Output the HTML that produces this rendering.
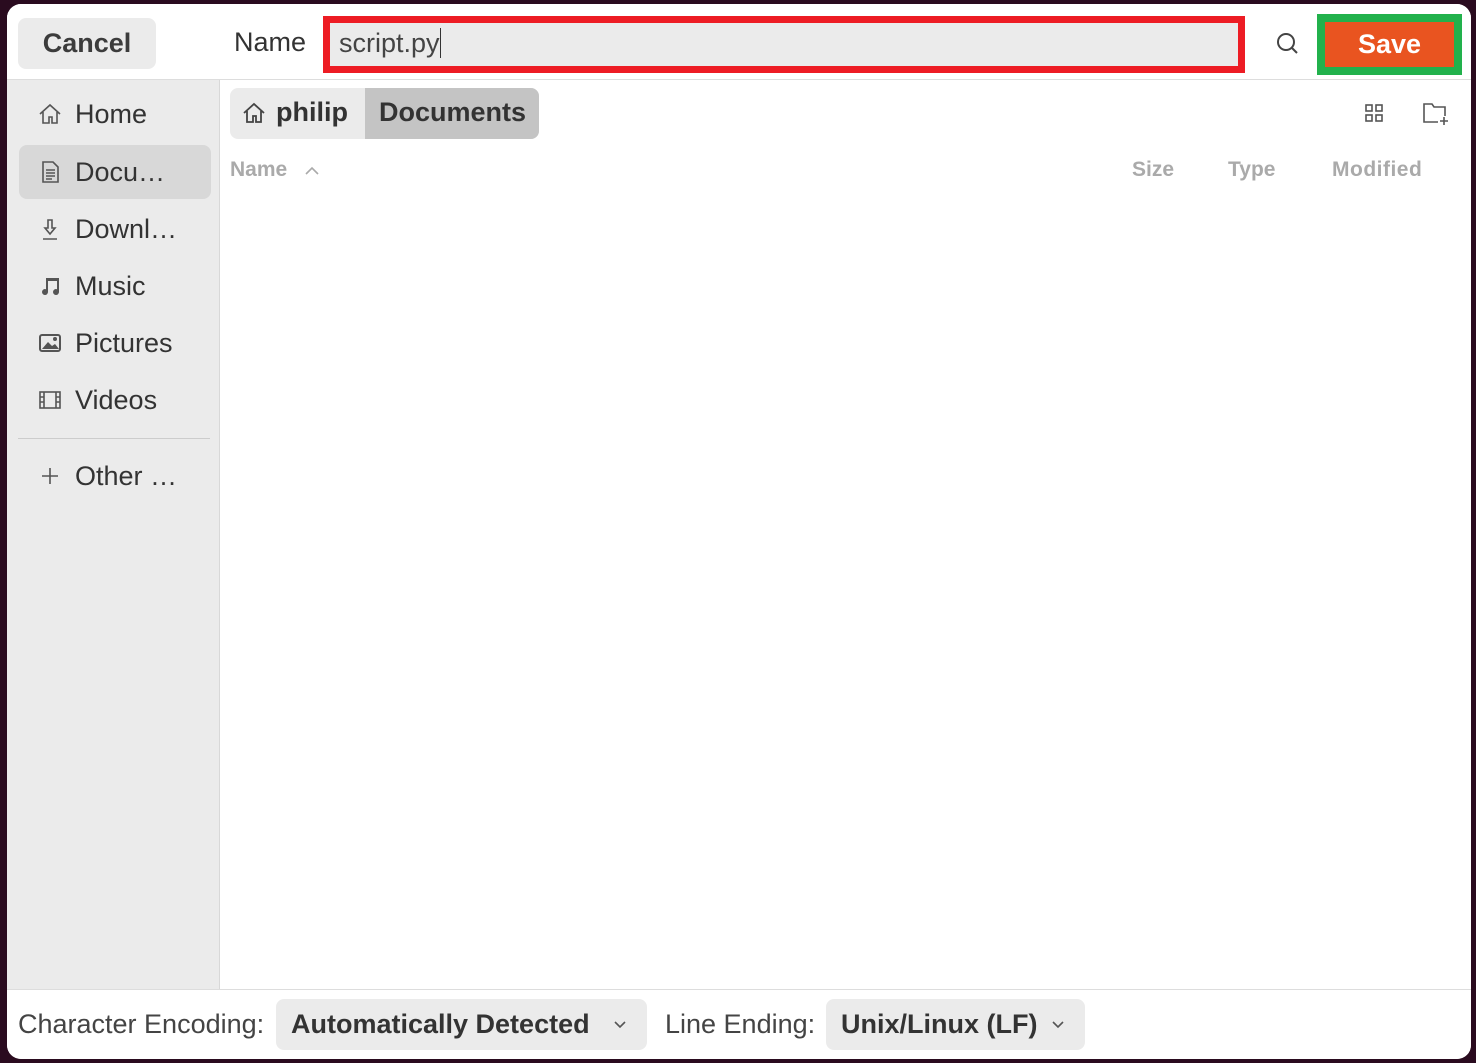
<!DOCTYPE html>
<html><head><style>
*{box-sizing:border-box;margin:0;padding:0}
body{width:1476px;height:1063px;background:#2a0b1f;font-family:"Liberation Sans",sans-serif;position:relative;overflow:hidden;color:#333}
.win{position:absolute;left:7px;top:4px;width:1464px;height:1055px;background:#fff;border-radius:14px;overflow:hidden}
.abs{position:absolute}
.hdr{left:0;top:0;width:1464px;height:76px;background:#fff;border-bottom:1px solid #ddd}
.btn{background:#ebebeb;border-radius:8px}
.side{left:0;top:76px;width:213px;height:910px;background:#ebebeb;border-right:1px solid #d8d8d8}
.item{position:absolute;left:12px;width:192px;height:54px;font-size:27px;color:#333;display:flex;align-items:center;border-radius:8px}
.item svg{margin-left:19px;margin-right:13px}
.hdrtxt{font-size:21px;color:#aaa;font-weight:bold}
.bottom{left:0;top:985px;width:1464px;height:70px;background:#fff;border-top:1px solid #ddd}
</style></head><body>
<div class="win">
<div class="abs hdr"></div>
<div class="abs btn" style="left:11px;top:14px;width:138px;height:51px;display:flex;align-items:center;justify-content:center;font-size:27px;font-weight:bold;color:#3c3c3c">Cancel</div>
<div class="abs" style="left:227px;top:23px;font-size:27px;color:#333">Name</div>
<div class="abs" style="left:316px;top:12px;width:922px;height:57px;border:7px solid #ed1c24;background:#ebebeb"></div>
<div class="abs" style="left:332px;top:24px;font-size:27px;color:#444">script.py<span style="display:inline-block;width:1px;height:30px;background:#333;vertical-align:-6px"></span></div>
<svg class="abs" style="left:1269px;top:28px" width="24" height="24" viewBox="0 0 24 24"><circle cx="10" cy="10" r="8" fill="none" stroke="#444" stroke-width="2"/><path d="M16 16l5 5" stroke="#444" stroke-width="2"/></svg>
<div class="abs" style="left:1310px;top:10px;width:145px;height:61px;background:#22b14c"></div>
<div class="abs" style="left:1318px;top:18px;width:129px;height:45px;background:#e95420;color:#fff;font-weight:bold;font-size:27px;display:flex;align-items:center;justify-content:center">Save</div>

<div class="abs side"></div>
<div class="item" style="top:83px"><svg width="24" height="24" viewBox="0 0 24 24" fill="none" stroke="#555" stroke-width="1.6"><path d="M2 12L12 3l10 9M5 10v11h6v-6h3v6h5V10"/></svg>Home</div>
<div class="item" style="top:141px;background:#d8d8d8"><svg width="24" height="24" viewBox="0 0 24 24" fill="none" stroke="#555" stroke-width="1.6"><path d="M5 2h10l5 5v15H5z M8 10h9M8 13h9M8 16h9M8 19h6"/></svg>Docu…</div>
<div class="item" style="top:198px"><svg width="24" height="24" viewBox="0 0 24 24" fill="none" stroke="#555" stroke-width="1.6"><path d="M10 3h4v8h3l-5 6-5-6h3z M5 22h14"/></svg>Downl…</div>
<div class="item" style="top:255px"><svg width="24" height="24" viewBox="0 0 24 24" fill="#555"><path d="M8 4h13v14a3 3 0 1 1-2-2.8V7h-9v11a3 3 0 1 1-2-2.8z"/></svg>Music</div>
<div class="item" style="top:312px"><svg width="24" height="24" viewBox="0 0 24 24"><rect x="2" y="4" width="20" height="16" rx="2" fill="none" stroke="#555" stroke-width="2"/><path d="M4 18l6-7 4 4 3-2 4 5z" fill="#555"/><circle cx="17" cy="8" r="2" fill="#555"/></svg>Pictures</div>
<div class="item" style="top:369px"><svg width="24" height="24" viewBox="0 0 24 24" fill="none" stroke="#555" stroke-width="1.6"><rect x="2" y="4" width="20" height="16"/><path d="M6 4v16M18 4v16M2 9h4M2 14h4M18 9h4M18 14h4"/></svg>Videos</div>
<div class="abs" style="left:11px;top:434px;width:192px;height:1px;background:#ccc"></div>
<div class="item" style="top:445px"><svg width="24" height="24" viewBox="0 0 24 24" stroke="#555" stroke-width="1.6"><path d="M12 4v16M4 12h16"/></svg>Other …</div>

<div class="abs" style="left:223px;top:84px;width:309px;height:51px;border-radius:8px;background:#ebebeb;overflow:hidden">
<div class="abs" style="left:135px;top:0;width:174px;height:51px;background:#c4c4c4"></div>
<svg class="abs" style="left:12px;top:13px" width="24" height="24" viewBox="0 0 24 24" fill="none" stroke="#444" stroke-width="1.8"><path d="M2 12L12 3l10 9M5 10v11h6v-6h3v6h5V10"/></svg>
<div class="abs" style="left:46px;top:9px;font-size:27px;font-weight:bold;color:#333">philip</div>
<div class="abs" style="left:149px;top:9px;font-size:27px;font-weight:bold;color:#333">Documents</div>
</div>
<svg class="abs" style="left:1357px;top:99px" width="20" height="20" viewBox="0 0 20 20" fill="none" stroke="#555" stroke-width="1.6"><rect x="2" y="2" width="6" height="6"/><rect x="12" y="2" width="6" height="6"/><rect x="2" y="12" width="6" height="6"/><rect x="12" y="12" width="6" height="6"/></svg>
<svg class="abs" style="left:1415px;top:97px" width="28" height="26" viewBox="0 0 28 26" fill="none" stroke="#555" stroke-width="1.6"><path d="M16 21H2V3h8l2 3h11v9"/><path d="M22 16v8M18 20h8"/></svg>
<div class="abs hdrtxt" style="left:223px;top:154px">Name</div>
<svg class="abs" style="left:297px;top:160px" width="16" height="12" viewBox="0 0 16 12" fill="none" stroke="#aaa" stroke-width="1.6"><path d="M2 10l6-6 6 6"/></svg>
<div class="abs hdrtxt" style="left:1125px;top:154px">Size</div>
<div class="abs hdrtxt" style="left:1221px;top:154px">Type</div>
<div class="abs hdrtxt" style="left:1325px;top:154px;letter-spacing:0.5px">Modified</div>

<div class="abs bottom"></div>
<div class="abs" style="left:11px;top:1005px;font-size:27px;color:#444">Character Encoding:</div>
<div class="abs btn" style="left:269px;top:995px;width:371px;height:51px;font-size:27px;font-weight:bold;color:#333;padding:10px 0 0 15px">Automatically Detected</div>
<svg class="abs" style="left:605px;top:1015px" width="16" height="12" viewBox="0 0 16 12" fill="none" stroke="#555" stroke-width="1.6"><path d="M3 3l5 5 5-5"/></svg>
<div class="abs" style="left:658px;top:1005px;font-size:27px;color:#444">Line Ending:</div>
<div class="abs btn" style="left:819px;top:995px;width:259px;height:51px;font-size:27px;font-weight:bold;color:#333;padding:10px 0 0 15px">Unix/Linux (LF)</div>
<svg class="abs" style="left:1043px;top:1015px" width="16" height="12" viewBox="0 0 16 12" fill="none" stroke="#555" stroke-width="1.6"><path d="M3 3l5 5 5-5"/></svg>
</div>
</body></html>
